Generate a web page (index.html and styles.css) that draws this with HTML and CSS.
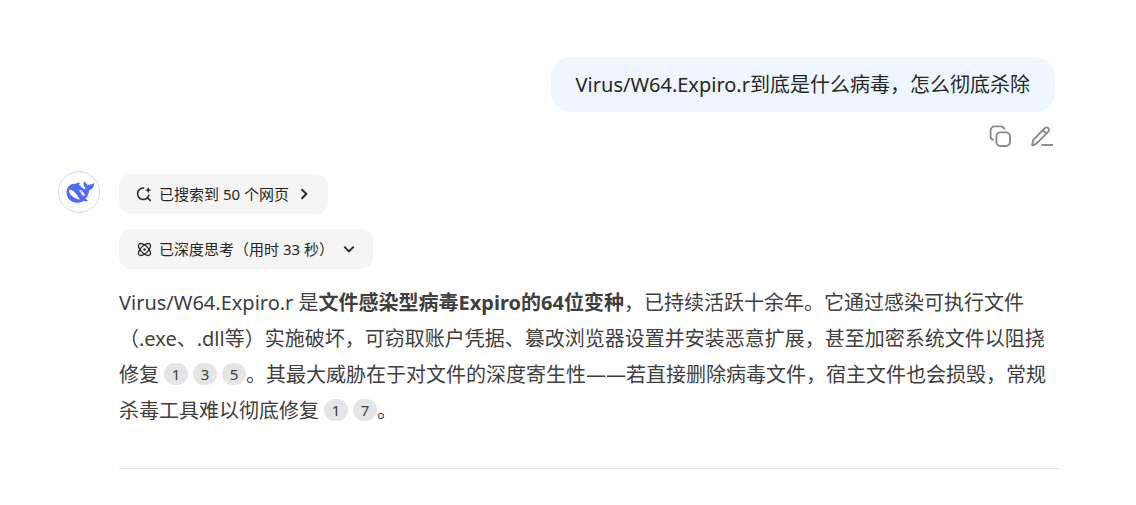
FILE: index.html
```html
<!DOCTYPE html>
<html lang="zh-CN">
<head>
<meta charset="utf-8">
<meta name="viewport" content="width=device-width, initial-scale=1">
<title>DeepSeek</title>
<link rel="stylesheet" href="styles.css">
</head>
<body>
<main class="chat">
  <section class="question">
    <p class="bubble">Virus/W64.Expiro.r到底是什么病毒，怎么彻底杀除</p>
    <div class="actions">
      <button class="icon-button" type="button" aria-label="复制">
        <svg width="24" height="24" viewBox="0 0 24 24" fill="none" stroke="#8b8b8b" stroke-width="1.9" stroke-linecap="round" aria-hidden="true">
          <rect x="8.400" y="8.400" width="13.600" height="13.600" rx="4"/>
          <path d="M5.200 15.800A3.600 3.600 0 0 1 2.600 12.400V6.400a4 4 0 0 1 4-4h6a4 4 0 0 1 3.700 2.500"/>
        </svg>
      </button>
      <button class="icon-button" type="button" aria-label="编辑">
        <svg width="24" height="24" viewBox="0 0 24 24" fill="none" stroke="#8b8b8b" stroke-width="1.9" stroke-linejoin="round" aria-hidden="true">
          <path d="M2.200 21.300l.9-5.200L15 4q1.600-1.300 3.200.1 1.600 1.700.2 3.400L6.800 19.300Q4.700 21.300 2.200 21.300zM12.800 6.200l3.500 3.500"/>
          <path d="M11.500 21H23"/>
        </svg>
      </button>
    </div>
  </section>

  <section class="answer">
    <div class="avatar">
      <svg width="28" height="22" viewBox="0 0 28 22" aria-hidden="true">
        <path fill="#4d6bfe" d="M27.600 2.200c-.3-.2-.5.200-.9.500-.7.700-1.500.8-2.400.7-1.100-.1-2 .3-2.800 1-.2-1.200-.9-1.900-1.900-2.400-.6-.3-.9-.7-1.100-1.400-.1-.4-.4-.4-.6 0-.9 1.700-.5 4.300 1.200 5.800.5.400.4.700.2 1.300-.1.600-.3.800-.9.500-2.100-.9-3.400-2.700-5.100-4.200-.7-.6-.5-1.100.5-1.500.6-.3.500-.8-.7-.8-1.300 0-2.500.6-4 1.100C4.800 2.500.5 5.800.5 11.300c0 6 4.700 10.500 10.600 10.500 2.500 0 4.700-.8 6.400-2.100 1.200.5 2.600.8 3.600.5 1-.2.700-.9.200-1.200-1.200-.6-1.500-.9-1.800-1.200 2.300-2.700 3.500-5.400 3.700-8.900 1.900-.3 3.200-1.200 4-2.700.6-1.100.9-2.400.8-3.400 0-.3-.1-.5-.4-.6z"/>
        <path fill="#fff" d="M3 9c1.500-.6 3.200 0 4.900 1.400 2.800 2.300 4.200 5.600 6 7.900-1.400.3-3-.2-4.600-1.300C5.700 15.500 3 12.900 3 9z"/>
        <path fill="#fff" d="M13.200 9.600c1.400-.7 3 0 4 1.500.8 1.400.9 2.200 2.100 3-.9.900-2.200.9-3.100 0-.8-.8-1-2-1.700-2.900-.4-.6-1-.5-1.300-1.600z"/>
        <path fill="#4d6bfe" d="M14.700 10.500c.7-.5 1.500-.1 1.700.6-.6.300-1.200.2-1.700-.6z"/>
      </svg>
    </div>
    <div class="answer-body">
      <button class="chip" type="button">
        <svg class="chip-icon" width="16" height="16" viewBox="0 0 16 16" fill="none" stroke="#262626" stroke-width="1.5" aria-hidden="true">
          <path d="M8.200 2.200A5.700 5.700 0 1 0 12.900 8.600M11.300 11.600l3.400 3.300"/>
          <path fill="#262626" stroke="none" d="M12.200 1l.9 2.200 2.300.9-2.300.9-.9 2.300-.9-2.300L9 4.100l2.300-.9z"/>
        </svg>
        <span>已搜索到 50 个网页</span>
        <svg class="chip-arrow" width="12" height="12" viewBox="0 0 12 12" fill="none" stroke="#262626" stroke-width="1.900" aria-hidden="true"><path d="M3.500 1.300L8.400 6l-4.900 4.700"/></svg>
      </button>
      <button class="chip" type="button">
        <svg class="chip-icon" width="16" height="16" viewBox="0 0 16 16" fill="none" stroke="#262626" stroke-width="1.300" aria-hidden="true">
          <ellipse cx="8.500" cy="8.500" rx="7.600" ry="3.700" transform="rotate(45 8.500 8.500)"/>
          <ellipse cx="8.500" cy="8.500" rx="7.600" ry="3.700" transform="rotate(-45 8.500 8.500)"/>
          <circle cx="8.500" cy="8.500" r="1.200" fill="#262626" stroke="none"/>
        </svg>
        <span>已深度思考（用时 33 秒）</span>
        <svg class="chip-arrow" width="12" height="12" viewBox="0 0 12 12" fill="none" stroke="#262626" stroke-width="1.900" aria-hidden="true"><path d="M1.300 3.600L6 8.400l4.700-4.800"/></svg>
      </button>
      <p class="text">Virus/W64.Expiro.r 是<strong>文件感染型病毒Expiro的64位变种</strong>，已持续活跃十余年。它通过感染可执行文件（.exe、.dll等）实施破坏，可窃取账户凭据、篡改浏览器设置并安装恶意扩展，甚至加密系统文件以阻挠修复<a class="cite" href="#1">1</a><a class="cite" href="#3">3</a><a class="cite" href="#5">5</a>。其最大威胁在于对文件的深度寄生性——若直接删除病毒文件，宿主文件也会损毁，常规杀毒工具难以彻底修复<a class="cite" href="#1">1</a><a class="cite" href="#7">7</a>。</p>
      <hr class="divider">
    </div>
  </section>
</main>
</body>
</html>
```

FILE: styles.css
```css
* {
  box-sizing: border-box;
}

body {
  margin: 0;
  background: #fff;
  color: #404040;
  font-family: "Noto Sans", "Noto Sans CJK SC", sans-serif;
  font-size: 20px;
  line-height: 36px;
}

button {
  border: 0;
  font: inherit;
  color: inherit;
  cursor: pointer;
}

svg {
  display: block;
  flex: none;
}

.chat {
  padding: 57px 77px 36px 58px;
}

.question {
  display: flex;
  flex-direction: column;
  align-items: flex-end;
  gap: 12px;
  padding-right: 4px;
}

.bubble {
  margin: 0;
  padding: 10px 25px 9px;
  border-radius: 20px;
  background: #eff6ff;
  color: #262626;
}

.actions {
  display: flex;
  gap: 18px;
  padding-right: 1px;
}

.icon-button {
  padding: 0;
  background: none;
}

.answer {
  display: flex;
  gap: 19px;
  margin-top: 23px;
}

.avatar {
  display: flex;
  flex: none;
  align-items: center;
  justify-content: center;
  width: 42px;
  height: 42px;
  padding-left: 2px;
  border: 1px solid #c9defb;
  border-radius: 50%;
}

.answer-body {
  display: flex;
  flex: 1;
  flex-direction: column;
  align-items: flex-start;
  gap: 15px;
  min-width: 0;
  padding-top: 3px;
}

.chip {
  display: flex;
  align-items: center;
  height: 40px;
  padding: 0 18px 0 17px;
  border-radius: 12px;
  background: #f5f5f5;
  color: #262626;
  font-size: 15px;
  line-height: 24px;
}

.chip-icon {
  margin-right: 7px;
}

.chip-arrow {
  margin-left: 9px;
}

.text {
  margin: 0;
  padding-top: 1px;
}

.cite {
  display: inline-block;
  width: 24px;
  height: 22px;
  margin-left: 5px;
  border-radius: 11px;
  background: #e5e5e5;
  color: #404040;
  font-size: 15px;
  line-height: 22px;
  text-align: center;
  text-decoration: none;
  vertical-align: 2px;
}

.divider {
  width: 100%;
  height: 1px;
  margin: 24px 0 0;
  border: 0;
  background: #e5e5e5;
}
```
